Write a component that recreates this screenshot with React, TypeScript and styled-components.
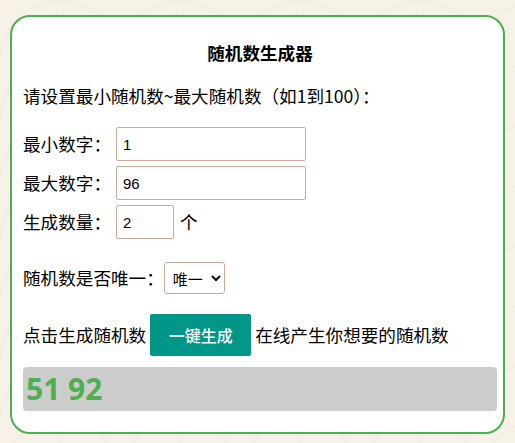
import React, { useState } from "react";
import styled, { createGlobalStyle } from "styled-components";

const GlobalStyle = createGlobalStyle`
  html, body {
    margin: 0;
    padding: 0;
  }
  body {
    background-color: #f6f2e8;
    background-image:
      radial-gradient(circle at 50% 100%, transparent 58px, rgba(238, 226, 206, 0.35) 59px, rgba(238, 226, 206, 0.35) 60px, transparent 61px),
      radial-gradient(circle at 0% 50%, transparent 58px, rgba(238, 226, 206, 0.25) 59px, rgba(238, 226, 206, 0.25) 60px, transparent 61px);
    background-size: 120px 60px;
    font-family: "Noto Sans CJK SC", "Noto Sans", sans-serif;
    color: #000;
  }
`;

const Page = styled.div`
  padding: 15px 10px 7px 10px;
`;

const Card = styled.div`
  background: #fff;
  border: 2px solid #4caf50;
  border-radius: 20px;
  padding: 23px 6px 21px 11px;
  font-size: 17.6px;
  line-height: 26px;
`;

const Title = styled.h2`
  margin: 0;
  font-size: 17.6px;
  line-height: 26px;
  font-weight: 700;
  text-align: center;
`;

const Intro = styled.p`
  margin: 17px 0 0;
`;

const Fields = styled.div`
  display: flex;
  flex-direction: column;
  gap: 5px;
  margin-top: 18px;
`;

const Row = styled.div<{ $gap?: number; $top?: number }>`
  display: flex;
  align-items: center;
  gap: ${(p) => p.$gap ?? 0}px;
  margin-top: ${(p) => p.$top ?? 0}px;
  white-space: nowrap;
`;

const Label = styled.span`
  margin-right: 5px;
`;

const Input = styled.input<{ $w: number }>`
  box-sizing: border-box;
  width: ${(p) => p.$w}px;
  height: 34px;
  border: 1px solid #cfa996;
  border-radius: 2px;
  padding: 0 6px;
  font-family: "Liberation Sans", Arial, sans-serif;
  font-size: 15px;
  color: #000;
  background: #fff;
  outline: none;
`;

const Unit = styled.span`
  margin-left: 6px;
`;

const Select = styled.select`
  box-sizing: border-box;
  width: 61px;
  height: 32px;
  border: 1px solid #cfa996;
  border-radius: 3px;
  padding: 0 2px 0 4px;
  font-family: "Noto Sans CJK SC", sans-serif;
  font-size: 15px;
  color: #000;
  background: #fff;
`;

const Button = styled.button`
  box-sizing: border-box;
  width: 101px;
  height: 42px;
  border: none;
  border-radius: 2px;
  background: #009688;
  color: #fff;
  font-family: "Noto Sans CJK SC", sans-serif;
  font-size: 16px;
  font-weight: 500;
  cursor: pointer;
`;

const Result = styled.div`
  margin-top: 11px;
  height: 44px;
  background: #cccccc;
  border-radius: 4px;
  padding-left: 3px;
  font-family: "Noto Sans", "Open Sans", sans-serif;
  font-weight: 700;
  font-size: 30px;
  line-height: 44px;
  color: #4caf50;
`;

export default function App() {
  const [min, setMin] = useState("1");
  const [max, setMax] = useState("96");
  const [count, setCount] = useState("2");
  const [unique, setUnique] = useState("1");
  const [result, setResult] = useState("51 92");

  const generate = () => {
    const lo = parseInt(min, 10) || 0;
    const hi = parseInt(max, 10) || 0;
    const n = parseInt(count, 10) || 0;
    const out: number[] = [];
    let guard = 0;
    while (out.length < n && guard < 10000) {
      guard++;
      const v = Math.floor(Math.random() * (hi - lo + 1)) + lo;
      if (unique === "1" && out.includes(v)) continue;
      out.push(v);
    }
    setResult(out.join(" "));
  };

  return (
    <>
      <GlobalStyle />
      <Page>
        <Card>
          <Title>随机数生成器</Title>
          <Intro>请设置最小随机数~最大随机数（如1到100）：</Intro>
          <Fields>
            <Row>
              <Label>最小数字：</Label>
              <Input $w={190} value={min} onChange={(e) => setMin(e.target.value)} />
            </Row>
            <Row>
              <Label>最大数字：</Label>
              <Input $w={190} value={max} onChange={(e) => setMax(e.target.value)} />
            </Row>
            <Row>
              <Label>生成数量：</Label>
              <Input $w={58} value={count} onChange={(e) => setCount(e.target.value)} />
              <Unit>个</Unit>
            </Row>
          </Fields>
          <Row $top={23}>
            <span>随机数是否唯一：</span>
            <Select value={unique} onChange={(e) => setUnique(e.target.value)}>
              <option value="1">唯一</option>
              <option value="0">不唯一</option>
            </Select>
          </Row>
          <Row $top={20} $gap={4}>
            <span>点击生成随机数</span>
            <Button onClick={generate}>一键生成</Button>
            <span>在线产生你想要的随机数</span>
          </Row>
          <Result>{result}</Result>
        </Card>
      </Page>
    </>
  );
}
